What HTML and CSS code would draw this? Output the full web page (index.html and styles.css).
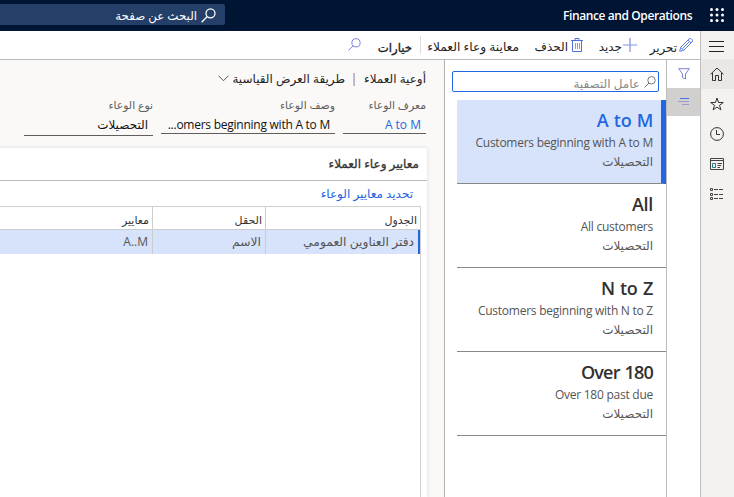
FILE: index.html
```html
<!DOCTYPE html>
<html lang="ar" dir="rtl">
<head>
<meta charset="utf-8">
<title>Finance and Operations</title>
<link rel="stylesheet" href="styles.css">
</head>
<body>
<header class="topbar">
  <svg class="waffle" width="14" height="14" viewBox="0 0 14 14" fill="#fff"><circle cx="1.500" cy="1.500" r="1.500"/><circle cx="7" cy="1.500" r="1.500"/><circle cx="12.500" cy="1.500" r="1.500"/><circle cx="1.500" cy="7" r="1.500"/><circle cx="7" cy="7" r="1.500"/><circle cx="12.500" cy="7" r="1.500"/><circle cx="1.500" cy="12.500" r="1.500"/><circle cx="7" cy="12.500" r="1.500"/><circle cx="12.500" cy="12.500" r="1.500"/></svg>
  <span class="brand" dir="ltr">Finance and Operations</span>
  <div class="search">
    <svg width="15" height="15" viewBox="0 0 15 15" fill="none" stroke="#fff" stroke-width="1.3"><circle cx="9.5" cy="5.3" r="4.5"/><path d="M6.3 8.5.6 14.2"/></svg>
    <span>البحث عن صفحة</span>
  </div>
</header>
<div class="shell">
  <nav class="rail">
    <div class="rail-item"><svg width="15" height="11" viewBox="0 0 15 11" stroke="#222" stroke-width="1"><path d="M0 .5h15M0 5.5h15M0 10.5h15"/></svg></div>
    <div class="rail-item active"><svg width="14" height="14" viewBox="0 0 14 14" fill="none" stroke="#333" stroke-width="1"><path d="M.5 7.3 7 1l6.500 6.300M2.500 6v7.500h3V8.500h3v5h3V6"/></svg></div>
    <div class="rail-item"><svg width="14" height="14" viewBox="0 0 14 14" fill="none" stroke="#333" stroke-width="1"><path d="m7 1 1.500 4.500h4.800L9.500 8.300l1.400 4.600L7 10.100l-3.900 2.800 1.400-4.600L.7 5.500h4.800z"/></svg></div>
    <div class="rail-item"><svg width="14" height="14" viewBox="0 0 14 14" fill="none" stroke="#333"><circle cx="7" cy="7" r="6.400"/><path d="M6.500 3v4.500H10"/></svg></div>
    <div class="rail-item"><svg width="14" height="12" viewBox="0 0 14 12" fill="none" stroke="#444"><path d="M.5.5h13v11H.5zM.5 2.500h13"/><path stroke="#277b8b" d="M2.500 5.500h3v4h-3z"/><path d="M7.500 5.500H12M7.500 7.500H11M7.500 9.500H10"/></svg></div>
    <div class="rail-item"><svg width="14" height="13" viewBox="0 0 14 13" fill="none" stroke="#444"><path d="M.5.5h2v2h-2zM.5 5.500h2v2h-2zM.5 9.500h2v2h-2zM4 1.500h4M9 1.500h4M4 6.500h4M9 6.500h4M4 10.500h4M9 10.500h4"/></svg></div>
  </nav>
  <div class="workspace">
    <div class="commands">
      <svg class="pencil" width="14" height="14" viewBox="0 0 14 14" fill="none" stroke="#5f7ae0"><path d="m.7 13.300 1-4L10 1a1.600 1.600 0 0 1 2.500.1l.5.500a1.600 1.600 0 0 1 0 2.400l-8.300 8.300zM1.700 9.300l3 3M9 2l3 3M3.500 10.500 10.500 3.500"/></svg>
      <span class="cmd c-edit">تحرير</span>
      <svg class="plus" width="14" height="14" viewBox="0 0 14 14" stroke="#7d90e2" stroke-width="1.200"><path d="M7 0v14M0 7h14"/></svg>
      <span class="cmd c-new">جديد</span>
      <svg class="trash" width="12" height="14" viewBox="0 0 12 14" fill="none" stroke="#4f6fe0"><path d="M0 2.500h12M4 2.500v-2h4v2M1.500 2.500v11h9v-11"/><path stroke="#8a9ae6" d="M4.500 5v6M6.500 5v6M8.500 5v6"/></svg>
      <span class="cmd c-del">الحذف</span>
      <span class="cmd c-preview">معاينة وعاء العملاء</span>
      <i class="sep"></i>
      <span class="cmd c-options">خيارات</span>
      <svg class="find" width="13" height="13" viewBox="0 0 13 13" fill="none" stroke="#7b7fdc"><circle cx="8" cy="4.800" r="4.100"/><path d="M5.200 7.700.5 12.400"/></svg>
    </div>
    <div class="content">
      <div class="tools">
        <div class="tool"><svg width="12" height="12" viewBox="0 0 12 12" fill="none" stroke="#7b7fdc"><path d="M.7.700h10.600L7.500 6v5l-3-1.500V6z"/></svg></div>
        <div class="tool on"><svg width="12" height="8" viewBox="0 0 12 8"><path stroke="#4b73e5" d="M2 .5h9"/><path stroke="#9c9bd6" d="M0 3.500h11M4 6.500h7"/></svg></div>
      </div>
      <aside class="list">
        <div class="filter">
          <svg width="12" height="12" viewBox="0 0 12 12" fill="none" stroke="#777"><circle cx="7.500" cy="4.300" r="3.700"/><path d="M5 7 .5 11.500"/></svg>
          <span>عامل التصفية</span>
        </div>
        <div class="card selected"><h2>A to M</h2><p dir="ltr">Customers beginning with A to M</p><p class="ar">التحصيلات</p></div>
        <div class="card"><h2>All</h2><p dir="ltr">All customers</p><p class="ar">التحصيلات</p></div>
        <div class="card"><h2>N to Z</h2><p dir="ltr">Customers beginning with N to Z</p><p class="ar">التحصيلات</p></div>
        <div class="card"><h2 class="tight">Over 180</h2><p dir="ltr">Over 180 past due</p><p class="ar">التحصيلات</p></div>
      </aside>
      <main class="detail">
        <div class="title"><span class="t-page">أوعية العملاء</span><span class="bar">|</span><span class="t-view">طريقة العرض القياسية</span>
          <svg width="11" height="7" viewBox="0 0 11 7" fill="none" stroke="#555"><path d="m.5.700 5 5 5-5"/></svg></div>
        <div class="fields">
          <div class="field f-id"><label>معرف الوعاء</label><div class="value link">A to M</div></div>
          <div class="field f-desc"><label>وصف الوعاء</label><div class="value" dir="ltr">...omers beginning with A to M</div></div>
          <div class="field f-type"><label>نوع الوعاء</label><div class="value ar">التحصيلات</div></div>
        </div>
        <section class="panel">
          <h3>معايير وعاء العملاء</h3>
          <div class="action">تحديد معايير الوعاء</div>
          <div class="grid">
            <div class="th">الجدول</div><div class="th">الحقل</div><div class="th">معايير</div>
            <div class="td first">دفتر العناوين العمومي</div><div class="td">الاسم</div><div class="td"><bdi>A..M</bdi></div>
          </div>
        </section>
      </main>
    </div>
  </div>
</div>
</body>
</html>
```
FILE: styles.css
```css
* { box-sizing: border-box; }
body { margin: 0; width: 734px; height: 497px; overflow: hidden; background: #fff; color: #323130; font: 12px "Open Sans", "DejaVu Sans", sans-serif; white-space: nowrap; }
svg { display: block; flex: none; }
h2, h3, p { margin: 0; }
.topbar { height: 31px; background: #001433; color: #fff; display: flex; }
.waffle { margin: 8px 10px 0 0; }
.brand { margin: 0 18px 0 0; width: 129px; font-size: 12px; font-weight: 600; line-height: 32px; letter-spacing: -.4px; text-align: right; }
.search { margin: 4px auto 0 0; width: 225px; height: 21px; background: #243f68; border-radius: 0 2px 2px 0; display: flex; padding-right: 9px; gap: 4px; line-height: 23px; font-size: 11.8px; }
.search svg { margin-top: 4px; }
.shell { display: flex; height: 466px; }
.rail { width: 34px; flex: none; background: #f3f2f1; border-left: 1px solid #c0bebc; }
.rail-item { height: 30px; display: flex; align-items: center; padding-right: 10px; }
.rail-item:first-child { height: 28px; padding-top: 2px; }
.rail-item.active { background: #eae8e6; }
.workspace { width: 700px; display: flex; flex-direction: column; }
.commands { height: 29px; border-bottom: 1px solid #bbb; display: flex; padding-right: 7px; }
.commands svg { margin-top: 7px; }
.cmd { line-height: 32px; flex: none; color: #222; }
.c-edit { width: 28px; margin: 0 2px 0 12px; font-size: 11.8px; }
.c-new { width: 25px; margin: 0 1px 0 14px; }
.c-del { width: 34px; margin: 0 3px 0 15px; }
.c-preview { width: 92px; margin-left: 6px; font-size: 12.2px; }
.sep { width: 1px; height: 18px; margin: 5px 0 0 8px; background: #ddd; }
.c-options { width: 33px; margin-left: 18px; font-size: 11.7px; -webkit-text-stroke: .3px #222; }
.content { display: flex; flex: 1; }
.tools { width: 34px; border-left: 1px solid #bbb; flex: none; }
.tool { height: 28px; display: flex; justify-content: center; align-items: center; }
.tool.on { background: #d2d0ce; }
.list { width: 222px; flex: none; border-left: 1px solid #b3b0ad; padding-top: 11px; }
.filter { width: 207px; height: 21px; margin: 0 7px 8px 0; border: 1px solid #2266e3; border-radius: 2px; display: flex; padding: 4px 2px 0; gap: 4px; color: #888; line-height: 15px; }
.card { width: 209px; height: 84px; border-bottom: 1px solid #888; padding: 6px 13px 0 0; }
.card.selected { background: #d7e3fb; border-right: 5px solid #2266e3; padding-right: 8px; }
.card h2 { font-size: 18px; line-height: 28px; font-weight: 600; letter-spacing: -.3px; word-spacing: 1px; height: 27px; }
.card h2.tight { letter-spacing: -.8px; }
.card.selected h2 { color: #2266e3; }
.card p { text-align: right; line-height: 19px; color: #555; letter-spacing: -.25px; }
.card .ar { letter-spacing: 0; }
.detail { width: 444px; background: #faf9f8; }
.title { display: flex; padding-right: 18px; height: 36px; line-height: 37px; color: #252423; }
.t-page { width: 63px; }
.bar { width: 18px; text-align: center; color: #a56600; }
.t-view { width: 112px; }
.title svg { margin: 15px 4px 0 0; }
.fields { display: flex; padding-right: 18px; gap: 8px; height: 52px; }
.field label { display: block; font-size: 10.8px; line-height: 17px; height: 18px; color: #605e5c; }
.value { height: 20px; border-bottom: 1px solid #605e5c; padding-right: 5px; line-height: 21px; text-align: right; color: #111; }
.f-id { width: 83px; }
.f-desc { width: 174px; }
.f-type { width: 129px; }
.f-desc .value { letter-spacing: -.25px; }
.f-type .value { height: 22px; }
.value.link, .action { color: #2266e3; }
.panel { width: 427px; height: 350px; background: #fff; border-radius: 0 2px 0 0; box-shadow: 0 0 4px #ddd; margin: 0 17px 0 0; }
h3 { height: 33px; border-bottom: 1px solid #bbb; line-height: 32px; padding-right: 8px; font-size: 12px; font-weight: 400; -webkit-text-stroke: .3px #323130; }
.action { height: 25px; line-height: 25px; padding-right: 14px; }
.grid { display: grid; grid-template-columns: 155px 113px 153px; grid-template-rows: 23px 24px; width: 421px; height: 292px; margin-right: 6px; border: 1px solid #d0d0d0; border-width: 1px 1px 0 0; }
.th, .td { border-left: 1px solid #ccc; border-bottom: 1px solid #ccc; padding-right: 3px; line-height: 25px; font-size: 11px; }
.td { background: #d7e3fb; border-bottom: 0; padding-right: 4px; font-size: 12.3px; line-height: 24px; color: #555; }
.td bdi { font-size: 12px; }
.td.first { border-right: 2px solid #2266e3; }
```
